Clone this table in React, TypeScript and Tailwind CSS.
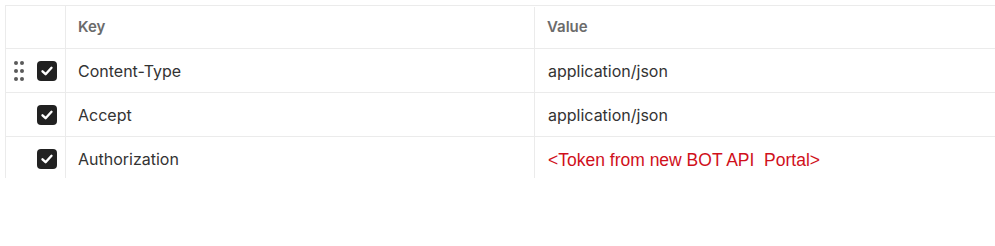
import React from "react";

const Check = () => (
  <div className="w-[20px] h-[20px] rounded-[4px] bg-[#212121] flex items-center justify-center">
    <svg width="14" height="14" viewBox="0 0 14 14" fill="none">
      <path d="M2.5 7.3 L5.6 10.2 L11.5 3.8" stroke="white" strokeWidth="2.4" strokeLinecap="round" strokeLinejoin="round" />
    </svg>
  </div>
);

const Drag = () => (
  <div className="grid grid-cols-2 gap-x-[2px] gap-y-[4px]">
    {[0, 1, 2, 3, 4, 5].map((i) => (
      <div key={i} className="w-[4px] h-[4px] rounded-full bg-[#5a5a5a]" />
    ))}
  </div>
);

const rows = [
  { key: "Content-Type", value: "application/json", drag: true, red: false },
  { key: "Accept", value: "application/json", drag: false, red: false },
  { key: "Authorization", value: "<Token from new BOT API  Portal>", drag: false, red: true },
];

export default function App() {
  return (
    <div className="w-[995px] h-[246px] bg-white pt-[5px] pl-[5px] overflow-hidden" style={{ fontFamily: "Inter, 'Noto Sans', sans-serif" }}>
      <div className="h-[173px] w-[1000px] border-l border-t border-[#ebebeb] overflow-hidden">
        <div className="flex h-[43px] border-b border-[#ebebeb]">
          <div className="w-[60px] shrink-0 border-r border-[#ebebeb]" />
          <div className="w-[469px] shrink-0 border-r border-[#ebebeb] pl-[12px] flex items-center text-[15px] font-semibold text-[#6b6b6b] mt-[1px]">
            Key
          </div>
          <div className="flex-1 pl-[12px] flex items-center text-[15px] font-semibold text-[#6b6b6b] mt-[1px]">
            Value
          </div>
        </div>
        {rows.map((r) => (
          <div key={r.key} className="flex h-[44px] border-b border-[#ebebeb]">
            <div className="w-[60px] shrink-0 border-r border-[#ebebeb] flex items-center">
              <div className="w-[31px] pl-[8px] flex items-center">{r.drag ? <Drag /> : null}</div>
              <Check />
            </div>
            <div className="w-[469px] shrink-0 border-r border-[#ebebeb] pl-[12px] flex items-center text-[16px] text-[#333333]">
              {r.key}
            </div>
            <div className="flex-1 pl-[13px] flex items-center">
              {r.red ? (
                <span className="text-[17.5px] text-[#d0101b] whitespace-pre mt-[3px]" style={{ fontFamily: "'Liberation Sans', Arial, sans-serif" }}>
                  {r.value}
                </span>
              ) : (
                <span className="text-[16px] text-[#333333]">{r.value}</span>
              )}
            </div>
          </div>
        ))}
      </div>
    </div>
  );
}
